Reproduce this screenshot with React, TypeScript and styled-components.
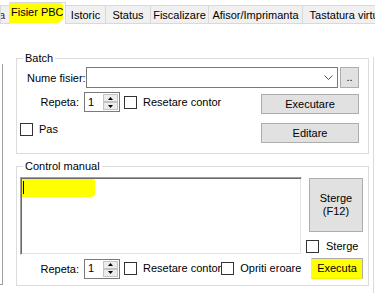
import React from "react";
import styled, { createGlobalStyle } from "styled-components";

const Global = createGlobalStyle`
  html, body {
    margin: 0;
    padding: 0;
    background: #ffffff;
    overflow: hidden;
  }
  body {
    font-family: "Liberation Sans", Arial, sans-serif;
    font-size: 11px;
    color: #000000;
  }
  * { box-sizing: border-box; }
`;

const Root = styled.div`
  width: 375px;
  height: 293px;
  overflow: hidden;
  background: #ffffff;
  line-height: 13px;
`;

/* ---------- tabs ---------- */
const TabStrip = styled.div`
  display: flex;
  align-items: flex-end;
  height: 24px;
  overflow: hidden;
`;

const Tab = styled.div<{ $w: number; $first?: boolean }>`
  flex: 0 0 ${(p) => p.$w}px;
  height: 19px;
  margin-left: ${(p) => (p.$first ? 0 : -1)}px;
  border: 1px solid #d9d9d9;
  background: #f0f0f0;
  display: flex;
  justify-content: center;
  padding-top: 3px;
  white-space: nowrap;
  overflow: hidden;
`;

const ClippedText = styled.span`
  margin-left: -6px;
  color: #5a1030;
`;

const ActiveTab = styled.div`
  flex: 0 0 57px;
  height: 22px;
  margin-left: -1px;
  border: 1px solid #d9d9d9;
  border-bottom: none;
  background: #ffffff;
  position: relative;
  z-index: 1;
  display: flex;
  align-items: flex-start;
`;

const TabMark = styled.span`
  display: block;
  margin-left: -1px;
  width: 54px;
  height: 20px;
  background: #ffff00;
  padding: 3px 0 0 2px;
  white-space: nowrap;
  border-radius: 0 3px 6px 1px;
`;

/* ---------- page ---------- */
const Page = styled.div`
  display: flex;
  align-items: flex-start;
  height: 269px;
`;

const LeftRail = styled.div`
  flex: 0 0 3px;
  margin-top: 40px;
  height: 221px;
  border-right: 1px solid #a0a0a0;
  border-bottom: 1px solid #a0a0a0;
`;

const Content = styled.div`
  flex: 0 0 353px;
  margin-left: 13px;
  display: flex;
  flex-direction: column;
`;

const RightRail = styled.div`
  flex: 0 0 1px;
  margin-left: 4px;
  margin-top: 33px;
  height: 236px;
  background: #dadada;
`;

const GroupBox = styled.div<{ $top: number; $padRight: number; $padBottom: number }>`
  margin-top: ${(p) => p.$top}px;
  border: 1px solid #dcdcdc;
  padding: 0 ${(p) => p.$padRight}px ${(p) => p.$padBottom}px 0;
  display: flex;
  flex-direction: column;
`;

const GroupTitle = styled.div`
  align-self: flex-start;
  margin: -7px 0 0 6px;
  padding: 0 2px;
  height: 13px;
  background: #ffffff;
  white-space: nowrap;
`;

const Row = styled.div<{ $top: number; $align?: string }>`
  display: flex;
  align-items: ${(p) => p.$align || "center"};
  margin-top: ${(p) => p.$top}px;
`;

const FieldLabel = styled.div<{ $right?: boolean }>`
  flex: 0 0 67px;
  padding-left: ${(p) => (p.$right ? 0 : 10)}px;
  padding-right: ${(p) => (p.$right ? 5 : 0)}px;
  text-align: ${(p) => (p.$right ? "right" : "left")};
  line-height: 20px;
  white-space: nowrap;
`;

const Combo = styled.div`
  flex: 0 0 252px;
  height: 21px;
  border: 1px solid #7a7a7a;
  background: #ffffff;
  display: flex;
  align-items: center;
  justify-content: flex-end;
  padding-right: 4px;
`;

const Spacer = styled.div`
  flex: 1;
`;

const Button = styled.div<{ $w: number; $h: number; $top?: number; $left?: number; $mark?: boolean }>`
  flex: 0 0 ${(p) => p.$w}px;
  width: ${(p) => p.$w}px;
  height: ${(p) => p.$h}px;
  margin-top: ${(p) => p.$top || 0}px;
  margin-left: ${(p) => p.$left || 0}px;
  background: ${(p) => (p.$mark ? "#ffff00" : "#e1e1e1")};
  border: 1px solid #adadad;
  border-left-color: ${(p) => (p.$mark ? "#ffff00" : "#adadad")};
  border-bottom-color: ${(p) => (p.$mark ? "#f2f200" : "#adadad")};
  display: flex;
  align-items: center;
  justify-content: center;
  text-align: center;
  white-space: nowrap;
`;

const DotsButton = styled(Button)`
  align-items: flex-end;
  padding-bottom: 3px;
`;

const Numeric = styled.div`
  flex: 0 0 36px;
  height: 20px;
  border: 1px solid #7a7a7a;
  background: #ffffff;
  display: flex;
  align-items: center;
  justify-content: space-between;
  padding: 1px 1px 1px 3px;
`;

const Spin = styled.div`
  width: 15px;
  height: 16px;
  display: flex;
  flex-direction: column;
`;

const SpinButton = styled.div`
  flex: 1;
  border: 1px solid #c4c4c4;
  background: #ececec;
  display: flex;
  align-items: center;
  justify-content: center;
`;

const Check = styled.span<{ $left?: number }>`
  flex: 0 0 13px;
  width: 13px;
  height: 13px;
  margin-left: ${(p) => p.$left || 0}px;
  border: 1px solid #333333;
  background: #ffffff;
`;

const CheckText = styled.span<{ $left: number }>`
  margin-left: ${(p) => p.$left}px;
  white-space: nowrap;
  line-height: 13px;
`;

const ControlTop = styled.div`
  display: flex;
  align-items: flex-start;
  margin-top: 4px;
`;

const Editor = styled.div`
  flex: 0 0 282px;
  height: 78px;
  margin-left: 3px;
  border: 1px solid;
  border-color: #a0a0a0 #ffffff #ffffff #a0a0a0;
  box-shadow: inset 1px 1px 0 #696969, inset -1px -1px 0 #e3e3e3;
  background: #ffffff;
  padding: 1px 0 0 1px;
`;

const EditorMark = styled.div`
  width: 73px;
  height: 18px;
  background: #ffff00;
  border-radius: 0 2px 4px 1px;
  padding: 2px 0 0 1px;
`;

const Caret = styled.div`
  width: 1px;
  height: 13px;
  background: #000000;
`;

const SideColumn = styled.div`
  margin-left: 4px;
  display: flex;
  flex-direction: column;
`;

const TwoLines = styled.span`
  line-height: 13px;
  white-space: pre;
`;

const Chevron = () => (
  <svg width="9" height="5" viewBox="0 0 9 5">
    <polyline points="0.5,0.5 4.5,4.5 8.5,0.5" fill="none" stroke="#555555" strokeWidth="1" />
  </svg>
);

const Arrow = ({ up }: { up: boolean }) => (
  <svg width="5" height="3" viewBox="0 0 5 3">
    <polygon points={up ? "2.5,0 5,3 0,3" : "0,0 5,0 2.5,3"} fill="#000000" />
  </svg>
);

const SpinBox = () => (
  <Numeric>
    <span>1</span>
    <Spin>
      <SpinButton>
        <Arrow up />
      </SpinButton>
      <SpinButton>
        <Arrow up={false} />
      </SpinButton>
    </Spin>
  </Numeric>
);

const tabs = [
  { label: "Istoric", w: 41 },
  { label: "Status", w: 46 },
  { label: "Fiscalizare", w: 59 },
  { label: "Afisor/Imprimanta", w: 95 },
  { label: "Tastatura virtuala", w: 99 },
];

export default function App() {
  return (
    <Root>
      <Global />
      <TabStrip>
        <Tab $w={10} $first>
          <ClippedText>a</ClippedText>
        </Tab>
        <ActiveTab>
          <TabMark>Fisier PBC</TabMark>
        </ActiveTab>
        {tabs.map((t) => (
          <Tab key={t.label} $w={t.w}>
            {t.label}
          </Tab>
        ))}
      </TabStrip>
      <Page>
        <LeftRail />
        <Content>
          <GroupBox $top={34} $padRight={9} $padBottom={10}>
            <GroupTitle>Batch</GroupTitle>
            <Row $top={2}>
              <FieldLabel>Nume fisier:</FieldLabel>
              <Combo>
                <Chevron />
              </Combo>
              <Spacer />
              <DotsButton $w={19} $h={21}>..</DotsButton>
            </Row>
            <Row $top={4} $align="flex-start">
              <FieldLabel $right>Repeta:</FieldLabel>
              <SpinBox />
              <Check $left={4} style={{ marginTop: 4 }} />
              <CheckText $left={6} style={{ marginTop: 4 }}>
                Resetare contor
              </CheckText>
              <Spacer />
              <Button $w={98} $h={20} $top={2}>
                Executare
              </Button>
            </Row>
            <Row $top={9} $align="flex-start">
              <Check $left={3} />
              <CheckText $left={6}>Pas</CheckText>
              <Spacer />
              <Button $w={98} $h={20}>
                Editare
              </Button>
            </Row>
          </GroupBox>

          <GroupBox $top={12} $padRight={5} $padBottom={6}>
            <GroupTitle>Control manual</GroupTitle>
            <ControlTop>
              <Editor>
                <EditorMark>
                  <Caret />
                </EditorMark>
              </Editor>
              <SideColumn>
                <Button $w={54} $h={32} $top={1} $left={3}>
                  <TwoLines>{"Sterge\n(F12)"}</TwoLines>
                </Button>
                <Row $top={8}>
                  <Check />
                  <CheckText $left={7}>Sterge</CheckText>
                </Row>
              </SideColumn>
            </ControlTop>
            <Row $top={3}>
              <FieldLabel $right>Repeta:</FieldLabel>
              <SpinBox />
              <Check $left={4} />
              <CheckText $left={6}>Resetare contor</CheckText>
              <Check />
              <CheckText $left={6}>Opriti eroare</CheckText>
              <Spacer />
              <Button $w={52} $h={21} $mark style={{ alignSelf: "flex-start" }}>
                Executa
              </Button>
            </Row>
          </GroupBox>
        </Content>
        <RightRail />
      </Page>
    </Root>
  );
}
